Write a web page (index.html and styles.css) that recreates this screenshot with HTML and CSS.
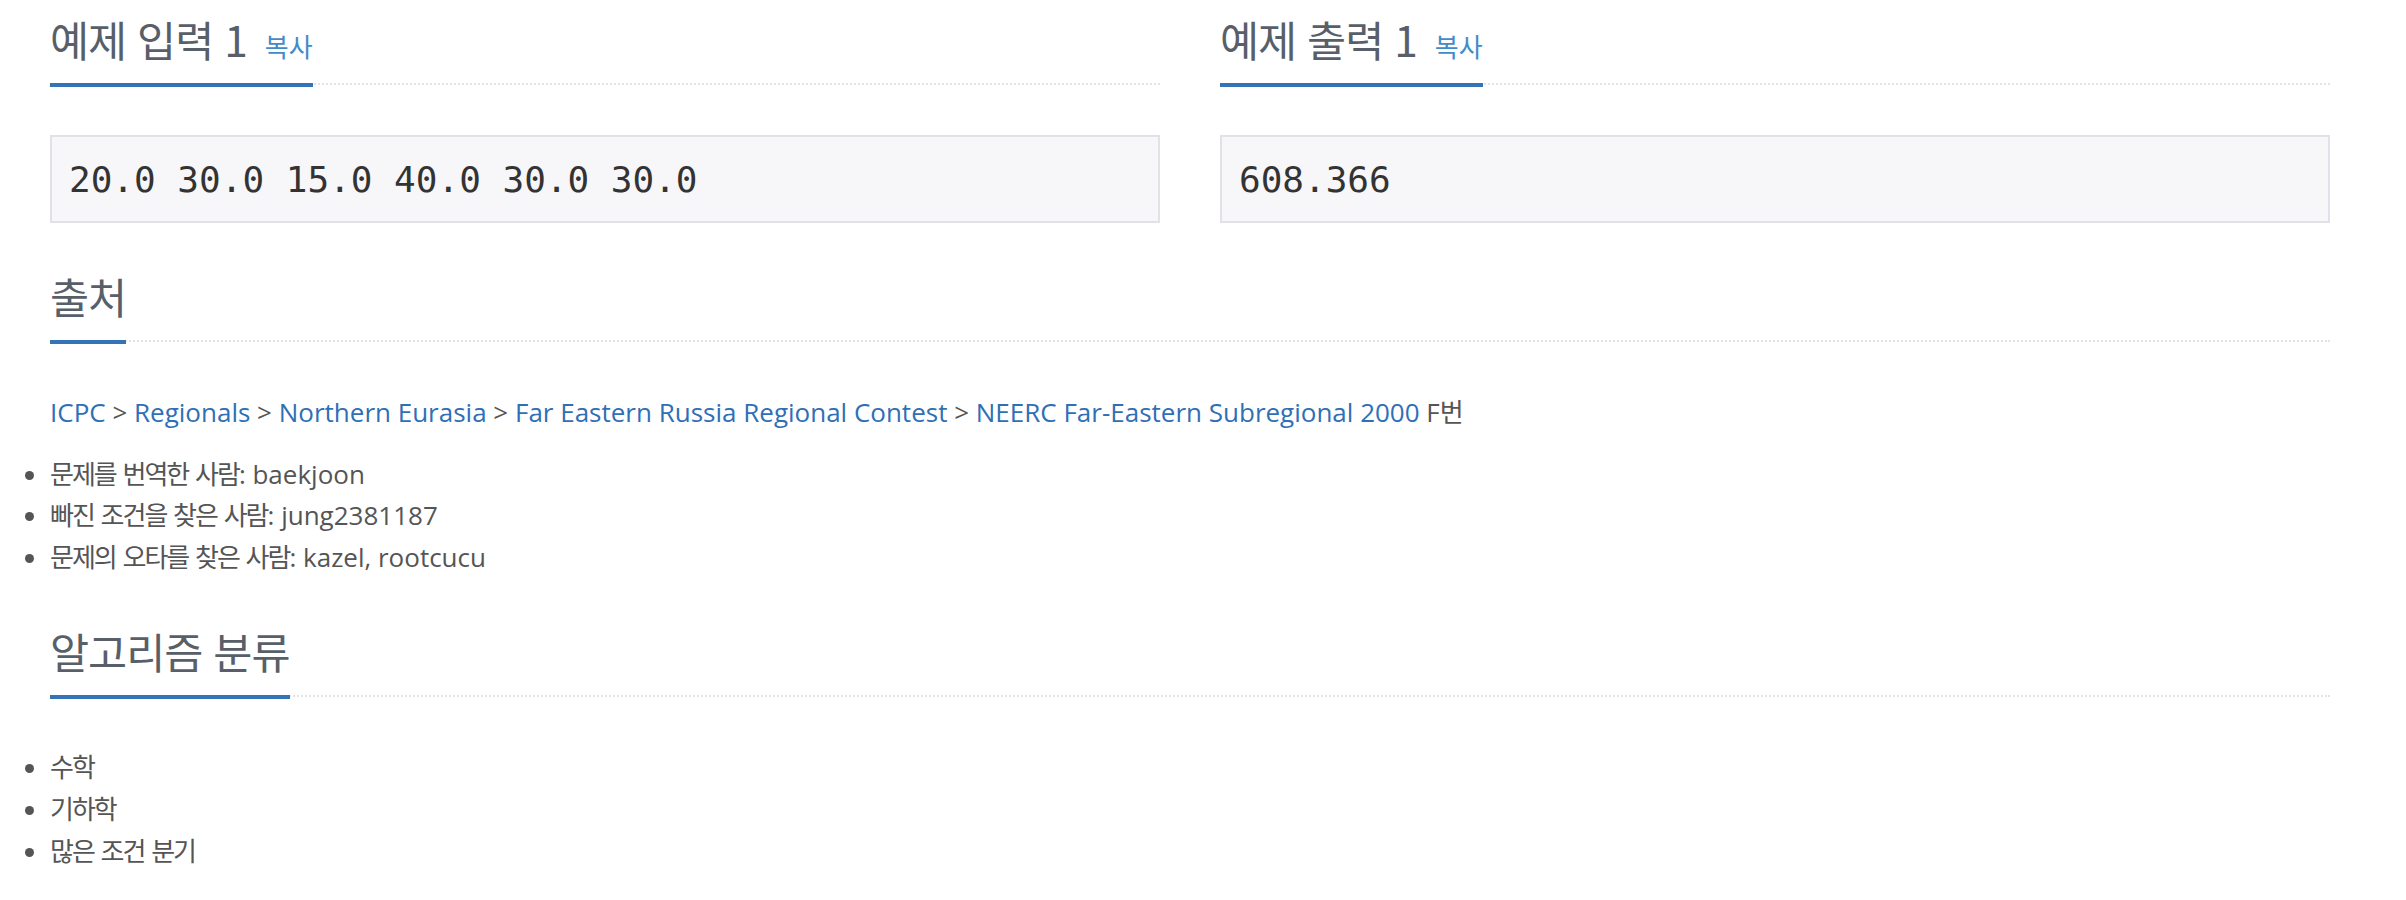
FILE: index.html
```html
<!DOCTYPE html>
<html lang="ko">
<head>
<meta charset="utf-8">
<title>문제</title>
<link rel="stylesheet" href="styles.css">
</head>
<body>
<div class="page">
  <div class="sample-row">
    <section class="sample">
      <h2 class="headline"><span class="title">예제 입력 1<a class="copy" href="#">복사</a></span></h2>
      <pre class="sampledata">20.0 30.0 15.0 40.0 30.0 30.0</pre>
    </section>
    <section class="sample">
      <h2 class="headline"><span class="title">예제 출력 1<a class="copy" href="#">복사</a></span></h2>
      <pre class="sampledata">608.366</pre>
    </section>
  </div>

  <section class="section">
    <h2 class="headline"><span class="title">출처</span></h2>
    <p class="source"><a class="link" href="#">ICPC</a> &gt; <a class="link" href="#">Regionals</a> &gt; <a class="link" href="#">Northern Eurasia</a> &gt; <a class="link" href="#">Far Eastern Russia Regional Contest</a> &gt; <a class="link" href="#">NEERC Far-Eastern Subregional 2000</a> F<span class="ko">번</span></p>
    <ul class="list credits">
      <li><span class="ko">문제를 번역한 사람</span>: baekjoon</li>
      <li><span class="ko">빠진 조건을 찾은 사람</span>: jung2381187</li>
      <li><span class="ko">문제의 오타를 찾은 사람</span>: kazel, rootcucu</li>
    </ul>
  </section>

  <section class="section">
    <h2 class="headline"><span class="title">알고리즘 분류</span></h2>
    <ul class="list tags">
      <li><span class="ko">수학</span></li>
      <li><span class="ko">기하학</span></li>
      <li><span class="ko">많은 조건 분기</span></li>
    </ul>
  </section>
</div>
</body>
</html>
```

FILE: styles.css
```css
* {
  box-sizing: border-box;
}

html,
body {
  margin: 0;
  padding: 0;
  background: #ffffff;
}

body {
  font-family: "Open Sans", "Noto Sans CJK KR", sans-serif;
  font-size: 26px;
  line-height: 1.6;
  color: #555555;
}

.page {
  width: 2280px;
  margin-left: 50px;
  padding-top: 16px;
}

.sample-row {
  display: grid;
  grid-template-columns: 1fr 1fr;
  column-gap: 60px;
}

.section {
  margin-top: 50px;
}

.headline {
  display: flex;
  margin: 0 0 50px;
  border-bottom: 2px dotted #e2e2e8;
  font-family: "Noto Sans CJK KR", sans-serif;
  font-weight: 400;
  font-size: 42.5px;
  letter-spacing: -1px;
  color: #585f69;
}

.headline .title {
  line-height: 46px;
  padding-bottom: 21px;
  border-bottom: 4px solid #3573b8;
  margin-bottom: -4px;
  white-space: nowrap;
}

.copy {
  margin-left: 18px;
  font-size: 26px;
  line-height: 1;
  letter-spacing: 0;
  color: #428bca;
  text-decoration: none;
}

.sampledata {
  margin: 0;
  padding: 16.5px 17px;
  font-family: "DejaVu Sans Mono", "Liberation Mono", monospace;
  font-size: 36px;
  line-height: 51px;
  color: #333333;
  background: #f7f7f9;
  border: 2px solid #e1e1e8;
  white-space: pre;
}

.source {
  margin: 0 0 20px;
}

.link {
  color: #2f6fb6;
  text-decoration: none;
}

.list {
  margin: 0;
  padding: 0;
}

.list li {
  list-style: disc outside;
}

.ko {
  letter-spacing: -2px;
  word-spacing: 2px;
}
```
